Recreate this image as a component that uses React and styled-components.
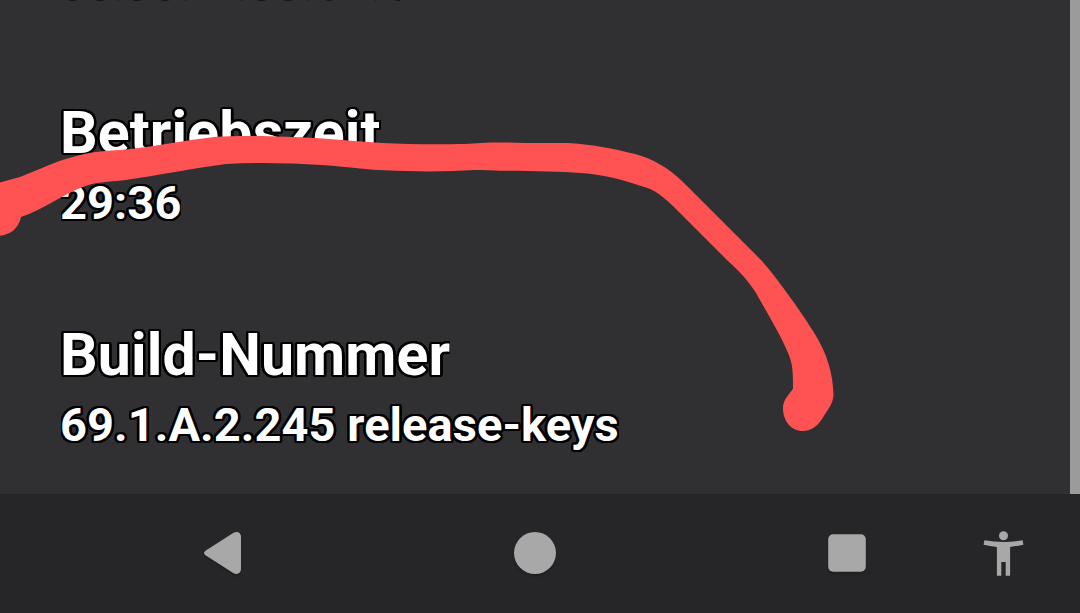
import React from "react";
import styled, { createGlobalStyle } from "styled-components";

const GlobalStyle = createGlobalStyle`
  body { margin: 0; background: #303032; font-family: Roboto, sans-serif; }
`;

const Screen = styled.div`
  position: relative;
  display: flex;
  flex-direction: column;
  width: 1080px;
  height: 613px;
  overflow: hidden;
`;

const Content = styled.main`
  display: flex;
  height: 494px;
  overflow: hidden;
  background: #303032;
`;

const List = styled.div`
  flex: 1;
  display: flex;
  flex-direction: column;
`;

const ClippedRow = styled.svg`
  display: block;
  flex: none;
  width: 400px;
  height: 2px;
  margin-bottom: 95px;
`;

const Item = styled.section`
  display: flex;
  flex: none;
  flex-direction: column;
  align-items: flex-start;
  height: 222px;
  margin-left: 61px;
`;

const ring = (radius) =>
  Array.from({ length: 24 }, (_, i) => {
    const a = (i * Math.PI) / 12;
    return `${(Math.cos(a) * radius).toFixed(2)}px ${(Math.sin(a) * radius).toFixed(2)}px 0 #000`;
  }).join(", ");

const Label = styled.div`
  overflow: hidden;
  white-space: nowrap;
  color: #fff;
  font-weight: 700;
  text-indent: -1px;
  text-shadow: ${ring(2.4)};
`;

const Title = styled(Label)`
  font-size: 59px;
  line-height: 72px;
  height: 72px;
  letter-spacing: 0.13px;
`;

const Summary = styled(Label)`
  font-size: 47px;
  line-height: 68px;
  height: 68px;
  letter-spacing: 0.06px;
`;

const Scrollbar = styled.div`
  width: 10px;
  background: #9b9b9b;
`;

const NavBar = styled.nav`
  display: flex;
  align-items: center;
  height: 119px;
  padding-left: 67px;
  background: #262628;
`;

const NavButton = styled.button`
  display: flex;
  flex: none;
  align-items: center;
  justify-content: center;
  box-sizing: border-box;
  width: ${(p) => p.$width}px;
  height: 119px;
  padding: 0 0 1px;
  border: 0;
  background: none;
  color: #a8a8a8;
`;

const Glyph = styled.svg`
  display: block;
  flex: none;
  width: 48px;
  height: 48px;
  overflow: visible;
  filter: ${(p) => (p.$flat ? "none" : "drop-shadow(0 2px 1px rgba(0, 0, 0, 0.18))")};
`;

const Marker = styled.svg`
  position: absolute;
  inset: 0;
  width: 1080px;
  height: 613px;
  pointer-events: none;
`;

const clippedMarks = [
  [72.5, 4], [100, 4], [118, 1.5], [137, 4], [165, 4], [185, 1.5], [241, 1.5],
  [261.5, 4], [288, 4], [308, 1.5], [329, 3], [375.5, 1.5], [398, 3],
];

export default function App() {
  return (
    <Screen>
      <GlobalStyle />
      <Content>
        <List>
          <ClippedRow viewBox="0 0 400 2">
            {clippedMarks.map(([x, r]) => (
              <ellipse key={x} cx={x} cy="0" rx={r} ry={r > 2 ? 1 : 0.4} fill="#161618" />
            ))}
          </ClippedRow>
          <Item>
            <Title>Betriebszeit</Title>
            <Summary>29:36</Summary>
          </Item>
          <Item>
            <Title>Build-Nummer</Title>
            <Summary>69.1.A.2.245 release-keys</Summary>
          </Item>
        </List>
        <Scrollbar />
      </Content>
      <NavBar>
        <NavButton $width={312} aria-label="Zurück">
          <Glyph viewBox="0 0 48 48">
            <path
              fill="currentColor"
              d="M7.2 21.2 34.2 4.1C38.2 1.8 42 3.6 42 8V40C42 44.400 38.2 46.200 34.2 43.900L7.2 26.800C4.400 25 4.400 23 7.2 21.200Z"
            />
          </Glyph>
        </NavButton>
        <NavButton $width={312} aria-label="Startseite">
          <Glyph viewBox="0 0 48 48">
            <circle cx="24" cy="24" r="21" fill="currentColor" />
          </Glyph>
        </NavButton>
        <NavButton $width={312} aria-label="Übersicht">
          <Glyph viewBox="0 0 48 48">
            <rect x="5.2" y="5.2" width="37.6" height="37.6" rx="5" fill="currentColor" />
          </Glyph>
        </NavButton>
        <NavButton $width={1} aria-label="Bedienungshilfen">
          <Glyph viewBox="0 0 48 48" $flat>
            <circle cx="23.5" cy="6.8" r="4.5" fill="currentColor" />
            <path
              fill="currentColor"
              d="M4.4 11.2Q23.500 14.800 42.6 11.2L43.4 15.7Q37 17.300 30.1 17.900V46.700H25.700V33H21.300V46.700H16.900V17.900Q10 17.300 3.600 15.700Z"
            />
          </Glyph>
        </NavButton>
      </NavBar>
      <Marker viewBox="0 0 1080 613">
        <path
          fill="#ff5353"
          d="M-5 184Q5 181 20 177C38 170 56 161 73 157C92 151 108 151 131 149C158 146 186 140 214 137C240 135 285 136 315 138C345 140 365 142 382 143C408 144.500 440 144.500 465 144C482 142.500 500 142 525 143H567C590 144 615 149 635 154C653 159 667 167 682 181L762 261C776 277 800 310 813 331C828 354 833 375 833.500 395C833 404 828 409 822 419C817 427 810 431 803 431C791 431 783 421 783 408C783 399 790 394 793 388.500C793 373 793 364 788 353C781 335 767 313 756 293C748 280 737 269 729 262L678 211C665 198 655 189 641 186C621 179 600 174 580 173C555 171 500 171 475 170C455 171 430 172 408 171C375 171 350 167 322 165C290 163 258 162 226 164C194 168 160 175 126 180C107 182 95 182 83 187C63 194 43 210 21 217C18 230 9 236 -5 236Z"
        />
      </Marker>
    </Screen>
  );
}
